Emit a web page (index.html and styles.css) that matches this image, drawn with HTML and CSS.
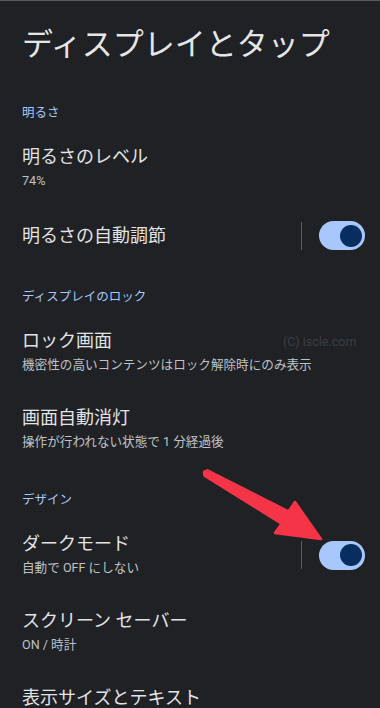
FILE: index.html
```html
<!DOCTYPE html>
<html lang="ja">
<head>
<meta charset="utf-8">
<link rel="stylesheet" href="styles.css">
</head>
<body>
<div class="screen">
  <h1 class="page-title">ディスプレイとタップ</h1>

  <div class="section-label first">明るさ</div>
  <div class="item">
    <div class="texts">
      <div class="item-title">明るさのレベル</div>
      <div class="item-sub">74%</div>
    </div>
  </div>
  <div class="item">
    <div class="texts">
      <div class="item-title">明るさの自動調節</div>
    </div>
    <div class="divider"></div>
    <div class="switch"><div class="thumb"></div></div>
  </div>

  <div class="section-label">ディスプレイのロック</div>
  <div class="item">
    <div class="texts">
      <div class="item-title">ロック画面</div>
      <div class="item-sub">機密性の高いコンテンツはロック解除時にのみ表示</div>
    </div>
  </div>
  <div class="item">
    <div class="texts">
      <div class="item-title">画面自動消灯</div>
      <div class="item-sub">操作が行われない状態で 1 分経過後</div>
    </div>
  </div>

  <div class="section-label">デザイン</div>
  <div class="item">
    <div class="texts">
      <div class="item-title">ダークモード</div>
      <div class="item-sub">自動で OFF にしない</div>
    </div>
    <div class="divider"></div>
    <div class="switch"><div class="thumb"></div></div>
  </div>
  <div class="item">
    <div class="texts">
      <div class="item-title">スクリーン セーバー</div>
      <div class="item-sub">ON / 時計</div>
    </div>
  </div>
  <div class="item">
    <div class="texts">
      <div class="item-title">表示サイズとテキスト</div>
    </div>
  </div>

  <div class="watermark">(C) iscle.com</div>

  <svg class="arrow" width="380" height="708" viewBox="0 0 380 708" xmlns="http://www.w3.org/2000/svg">
    <polygon points="207.5,469.4 288.5,510.4 295,501 321,538 275,532 281.5,522.6 204.5,474.6" fill="#f53447" stroke="#f53447" stroke-width="2.5" stroke-linejoin="round"/>
    <circle cx="206" cy="472" r="3.2" fill="#f53447"/>
  </svg>
</div>
</body>
</html>
```

FILE: styles.css
```css
html, body {
  margin: 0;
  padding: 0;
  background: #1f2125;
}

.screen {
  position: relative;
  width: 380px;
  height: 708px;
  overflow: hidden;
  background: #1f2125;
  border-top: 1px solid #55585d;
  box-sizing: border-box;
  font-family: Roboto, "Noto Sans CJK JP", sans-serif;
  color: #e3e3e6;
}

.page-title {
  margin: 21px 0 40px;
  padding: 0 22px;
  font-size: 31px;
  font-weight: 400;
  line-height: 40px;
  color: #e6e6e8;
  font-family: "Noto Sans CJK JP", sans-serif;
}

.section-label {
  width: fit-content;
  padding: 21px 22px 8px;
  font-size: 12.5px;
  line-height: 20px;
  color: #a8c7fa;
  font-family: "Noto Sans CJK JP", sans-serif;
}

.section-label.first {
  padding-top: 0;
}

.item {
  display: flex;
  align-items: center;
  padding: 14px 15px 15px 22px;
}

.texts {
  flex: 1;
  min-width: 0;
}

.item-title {
  width: fit-content;
  font-size: 18px;
  line-height: 26px;
  color: #e3e3e6;
}

.item-sub {
  width: fit-content;
  font-size: 12.6px;
  line-height: 22px;
  color: #bfc2c6;
}

.divider {
  width: 1px;
  height: 28px;
  background: #5a5d62;
  margin-right: 17px;
}

.switch {
  width: 46px;
  height: 29px;
  border-radius: 15px;
  background: #a8c7fa;
  display: flex;
  align-items: center;
  justify-content: flex-end;
  padding-right: 3px;
  box-sizing: border-box;
}

.thumb {
  width: 22px;
  height: 22px;
  border-radius: 50%;
  background: #062e5f;
}

.watermark {
  position: absolute;
  left: 283px;
  top: 332px;
  font-size: 12.5px;
  line-height: 18px;
  color: #3c3f44;
  font-family: Roboto, sans-serif;
}

.arrow {
  position: absolute;
  left: 0;
  top: 0;
  pointer-events: none;
}
```
